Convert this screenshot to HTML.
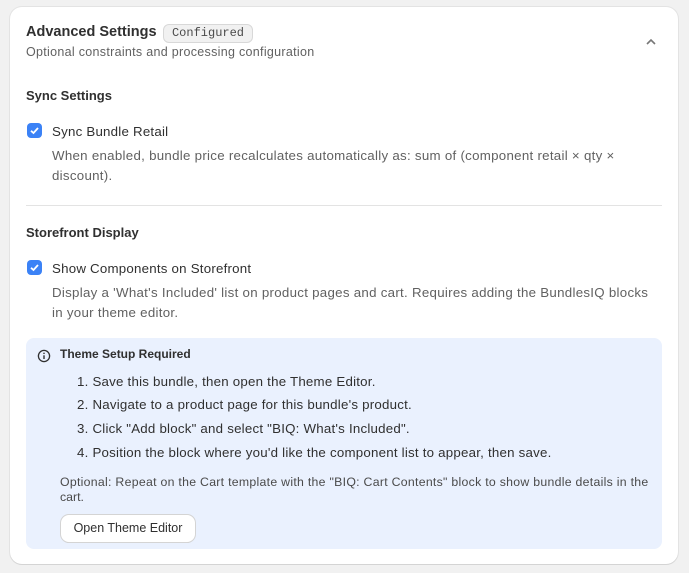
<!DOCTYPE html>
<html><head><style>
*{margin:0;padding:0;box-sizing:border-box}
body{width:689px;height:573px;background:#f1f1f1;font-family:"Liberation Sans",sans-serif;color:#303030;position:relative;overflow:hidden}
.card{position:absolute;left:10px;top:7px;width:668px;height:557px;background:#fff;border-radius:12px;box-shadow:0 1px 0 #d4d4d4,0 0 0 1px #e3e3e3}
.a{position:absolute;white-space:nowrap}
.h{font-size:14.5px;font-weight:bold;color:#303030}
.s{font-size:13.3px;letter-spacing:0.28px;color:#616161}
.l{font-size:13.3px;letter-spacing:0.22px;color:#303030}
.b{font-size:13px;font-weight:bold;color:#303030}
.cb{position:absolute;width:15px;height:15px;border-radius:4px;background:#3b82f6}
</style></head><body>
<div class="card"></div>
<div class="a h" style="left:26px;top:24px">Advanced Settings</div>
<div class="a" style="left:163px;top:24px;width:90px;height:19px;background:#f1f1f1;border:1px solid #d8d8d8;border-radius:6px;font-family:'Liberation Mono',monospace;font-size:12px;color:#4a4a4a;text-align:center;line-height:17px">Configured</div>
<div class="a" style="left:26px;top:45px;font-size:12.5px;letter-spacing:0.3px;color:#616161">Optional constraints and processing configuration</div>
<svg class="a" style="left:645px;top:37px" width="12" height="10"><path d="M2 7 L6 3 L10 7" stroke="#777" stroke-width="1.6" fill="none"/></svg>
<div class="a b" style="left:26px;top:88px">Sync Settings</div>
<div class="cb" style="left:27px;top:123px"></div>
<svg class="a" style="left:27px;top:123px" width="15" height="15"><path d="M4 7.8 L6.5 10 L11 5" stroke="#fff" stroke-width="1.8" fill="none"/></svg>
<div class="a l" style="left:52px;top:124px">Sync Bundle Retail</div>
<div class="a s" style="left:52px;top:148px">When enabled, bundle price recalculates automatically as: sum of (component retail × qty ×</div>
<div class="a s" style="left:52px;top:168px">discount).</div>
<div class="a" style="left:26px;top:205px;width:636px;height:1px;background:#e3e3e3"></div>
<div class="a b" style="left:26px;top:225px">Storefront Display</div>
<div class="cb" style="left:27px;top:260px"></div>
<svg class="a" style="left:27px;top:260px" width="15" height="15"><path d="M4 7.8 L6.5 10 L11 5" stroke="#fff" stroke-width="1.8" fill="none"/></svg>
<div class="a l" style="left:52px;top:261px">Show Components on Storefront</div>
<div class="a s" style="left:52px;top:285px">Display a 'What's Included' list on product pages and cart. Requires adding the BundlesIQ blocks</div>
<div class="a s" style="left:52px;top:305px">in your theme editor.</div>
<div class="a" style="left:26px;top:338px;width:636px;height:211px;background:#eaf1fe;border-radius:8px"></div>
<svg class="a" style="left:37px;top:349px" width="14" height="14"><circle cx="7" cy="7" r="5.6" stroke="#303030" stroke-width="1.3" fill="none"/><path d="M7 6.3V10" stroke="#303030" stroke-width="1.4"/><circle cx="7" cy="4.3" r="0.8" fill="#303030"/></svg>
<div class="a" style="left:60px;top:347px;font-size:12px;font-weight:bold;color:#303030">Theme Setup Required</div>
<div class="a l" style="left:77px;top:374px">1. Save this bundle, then open the Theme Editor.</div>
<div class="a l" style="left:77px;top:397px">2. Navigate to a product page for this bundle's product.</div>
<div class="a l" style="left:77px;top:421px">3. Click "Add block" and select "BIQ: What's Included".</div>
<div class="a l" style="left:77px;top:445px">4. Position the block where you'd like the component list to appear, then save.</div>
<div class="a" style="left:60px;top:475px;font-size:12.3px;letter-spacing:0.28px;color:#4a4a4a">Optional: Repeat on the Cart template with the "BIQ: Cart Contents" block to show bundle details in the</div>
<div class="a" style="left:60px;top:490px;font-size:12.3px;color:#4a4a4a">cart.</div>
<div class="a" style="left:61px;top:515px;width:134px;height:27px;background:#fff;border-radius:8px;box-shadow:0 0 0 1px #d4d4d4,0 1px 0 #bbb;font-size:12.5px;color:#303030;text-align:center;line-height:27px">Open Theme Editor</div>
</body></html>
